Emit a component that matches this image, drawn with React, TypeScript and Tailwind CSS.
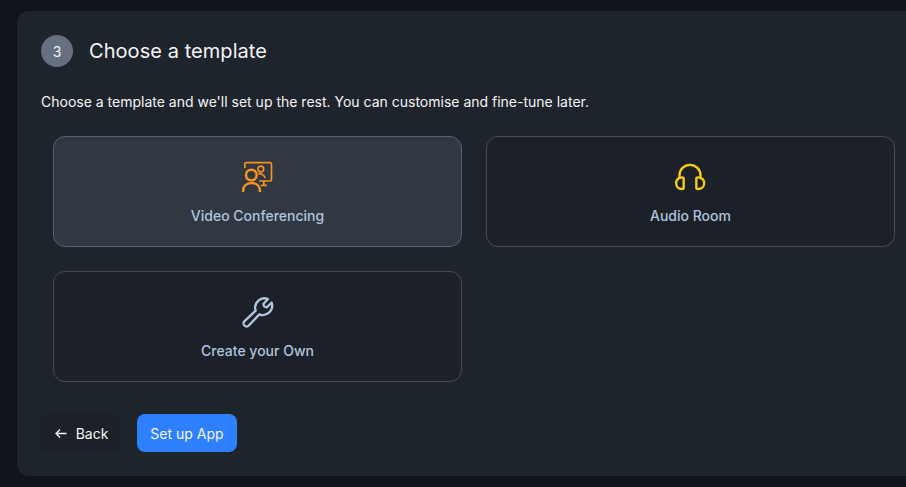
import type { ReactNode } from "react";

function ConferenceIcon() {
  return (
    <svg width="32" height="32" viewBox="36.500 33 96 96" fill="none" stroke="#f7931e" strokeWidth="5">
      <path d="M45 54V42q0-4 4-4h72q4 0 4 4v45q0 6-4 6H88M102 94v12M93 106h18" />
      <circle cx="93" cy="57" r="8.500" />
      <path d="M85 71q6-1 10 1 8 3 11 12" />
      <circle cx="64.500" cy="75" r="16" strokeWidth="7.5" />
      <path d="M39.500 126v-2c0-15 10-25 25.500-25s25.500 10 25.500 25v2" strokeWidth="7.5" />
    </svg>
  );
}

function HeadphonesIcon() {
  return (
    <svg width="32" height="32" viewBox="45 33 96 96" fill="none" stroke="#facc15" strokeWidth="7" strokeLinejoin="round">
      <path d="M58.500 85V76a31.500 31.500 0 0 1 63 0v9" />
      <path d="M71 85v29q0 3-5 3c-11 0-17.500-7-17.500-17S55 83 66 82q5 0 5 3zM109 85v29q0 3 5 3c11 0 18.500-7 18.500-17S125 83 114 82q-5 0-5 3z" />
    </svg>
  );
}

function WrenchIcon() {
  return (
    <svg width="32" height="32" viewBox="35 33 96 96" fill="none" stroke="#b0c4de" strokeWidth="7" strokeLinecap="round" strokeLinejoin="round">
      <path d="M113 42a28 28 0 0 0-37 35L42 109a8.500 8.500 0 0 0 13.500 12.500L87 88a28 28 0 0 0 37-35l-15 14q-9 0-10-10z" />
    </svg>
  );
}

function TemplateCard({ icon, label, selected = false }: { icon: ReactNode; label: string; selected?: boolean }) {
  return (
    <button
      className={`flex h-[111px] flex-col items-center rounded-[12px] border pt-6 ${
        selected ? "border-[#5a626d] bg-[#313842]" : "border-[#484b53] bg-[#1c2028]"
      }`}
    >
      {icon}
      <span className="mt-[13px] text-sm leading-5 font-medium text-[#b0c4de]">{label}</span>
    </button>
  );
}

export default function App() {
  return (
    <div className="h-[487px] overflow-hidden bg-[#10141c] pt-[11px] pl-[17px] font-['Inter',sans-serif] text-[#f5f5f5]">
      <main className="h-[465px] w-[914px] rounded-[12px] bg-[#1e242b] p-6">
        <header className="flex items-center gap-4">
          <span className="flex size-8 items-center justify-center rounded-full bg-[#667080] pt-px text-sm">3</span>
          <h1 className="text-xl leading-8 tracking-[0.06px]">Choose a template</h1>
        </header>
        <p className="mt-[25px] text-sm leading-5">
          Choose a template and we'll set up the rest. You can customise and fine-tune later.
        </p>
        <section className="mt-6 ml-3 grid grid-cols-[409px_409px] gap-6">
          <TemplateCard icon={<ConferenceIcon />} label="Video Conferencing" selected />
          <TemplateCard icon={<HeadphonesIcon />} label="Audio Room" />
          <TemplateCard icon={<WrenchIcon />} label="Create your Own" />
        </section>
        <footer className="mt-8 flex gap-4">
          <button className="flex h-[38px] w-20 items-center justify-center gap-2 rounded-lg bg-[#1c2028] pt-0.5 text-sm">
            <svg width="14" height="14" viewBox="0 0 14 14" fill="none" stroke="currentColor" strokeWidth="1.3">
              <path d="M12.500 6.500H2M6 2.500l-4 4 4 4" />
            </svg>
            Back
          </button>
          <button className="h-[38px] w-[100px] rounded-lg bg-[#2e80ff] pt-0.5 text-sm">Set up App</button>
        </footer>
      </main>
    </div>
  );
}
